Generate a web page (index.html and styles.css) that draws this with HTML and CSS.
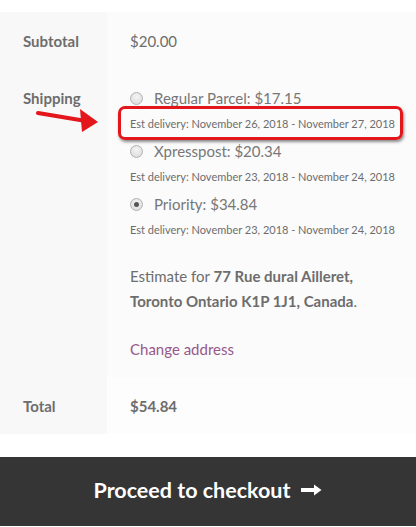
FILE: index.html
```html
<!DOCTYPE html>
<html>
<head>
<meta charset="utf-8">
<link rel="stylesheet" href="styles.css">
</head>
<body>
<table class="totals">
  <tr class="row row-subtotal">
    <th class="label">Subtotal</th>
    <td class="value">$20.00</td>
  </tr>
  <tr class="row row-shipping">
    <th class="label label-shipping">Shipping
      <svg class="arrow" width="70" height="30" viewBox="0 0 70 30">
        <line x1="2" y1="6" x2="50" y2="14" stroke="#e3161b" stroke-width="4" stroke-linecap="round"/>
        <polygon points="44,2 62,15 46,25" fill="#e3161b"/>
      </svg>
    </th>
    <td class="value value-shipping">
      <ul class="methods">
        <li class="method">
          <div class="option"><span class="radio"></span><span class="method-name">Regular Parcel: $17.15</span></div>
          <p class="est"><span class="est-text highlight">Est delivery: November 26, 2018 - November 27, 2018</span></p>
        </li>
        <li class="method">
          <div class="option"><span class="radio"></span><span class="method-name">Xpresspost: $20.34</span></div>
          <p class="est"><span class="est-text">Est delivery: November 23, 2018 - November 24, 2018</span></p>
        </li>
        <li class="method">
          <div class="option"><span class="radio checked"></span><span class="method-name">Priority: $34.84</span></div>
          <p class="est"><span class="est-text">Est delivery: November 23, 2018 - November 24, 2018</span></p>
        </li>
      </ul>
      <p class="destination">Estimate for <strong>77 Rue dural Ailleret, Toronto Ontario K1P 1J1, Canada</strong>.</p>
      <a class="change" href="#">Change address</a>
    </td>
  </tr>
  <tr class="row row-total">
    <th class="label">Total</th>
    <td class="value"><strong>$54.84</strong></td>
  </tr>
</table>
<div class="checkout-wrap">
  <a class="checkout" href="#">Proceed to checkout<svg class="checkout-arrow" width="21" height="12" viewBox="0 0 21 12"><rect x="0" y="4" width="14" height="4" fill="#ffffff"/><polygon points="13,0.5 20.5,6 13,11.5" fill="#ffffff"/></svg></a>
</div>
</body>
</html>
```

FILE: styles.css
```css
html, body {
  margin: 0;
  padding: 0;
  background: #ffffff;
}
body {
  font-family: "Lato", "Open Sans", sans-serif;
  color: #6d6d6d;
  width: 416px;
}
.totals {
  margin-top: 12px;
  width: 416px;
  border-collapse: collapse;
  border-spacing: 0;
}
.label {
  width: 107px;
  box-sizing: border-box;
  background: #f8f8f8;
  text-align: left;
  vertical-align: top;
  font-weight: 700;
  font-size: 15px;
  line-height: 24px;
  padding: 17px 0 17px 23px;
}
.value {
  background: #fbfbfb;
  vertical-align: top;
  font-size: 15px;
  line-height: 24px;
  padding: 17px 10px 17px 23px;
}
.row-shipping .label {
  padding-top: 16px;
}
.value-shipping {
  padding-top: 15px;
  padding-bottom: 16px;
}
.row-total .value {
  background: #fdfdfd;
}
.row-total .label, .row-total .value {
  padding-top: 17px;
  padding-bottom: 16px;
}
.label-shipping {
  position: relative;
}
.arrow {
  position: absolute;
  left: 36px;
  top: 37px;
}
.methods {
  list-style: none;
  margin: 0;
  padding: 0;
}
.method {
  margin: 0 0 1px 0;
}
.option {
  display: flex;
  align-items: center;
  height: 26px;
}
.radio {
  width: 13px;
  height: 13px;
  box-sizing: border-box;
  border-radius: 50%;
  border: 1px solid #b3b3b3;
  background: radial-gradient(circle at 50% 35%, #f4f4f4 0%, #d8d8d8 100%);
  margin-right: 11px;
  display: flex;
  align-items: center;
  justify-content: center;
  flex: none;
}
.radio.checked::after {
  content: "";
  width: 5px;
  height: 5px;
  border-radius: 50%;
  background: #555555;
}
.method-name {
  font-size: 15px;
  color: #777777;
}
.est {
  margin: 0;
  height: 26px;
  display: flex;
  align-items: center;
}
.est-text {
  font-size: 11px;
  color: #6d6d6d;
  position: relative;
  white-space: nowrap;
}
.highlight::after {
  content: "";
  position: absolute;
  left: -12px;
  right: -8px;
  top: -6px;
  bottom: -4px;
  border: 3px solid #e3161b;
  border-radius: 7px;
  box-shadow: 1px 2px 3px rgba(0,0,0,0.45);
}
.destination {
  margin: 21px 0 23px 0;
  font-size: 15px;
  line-height: 25px;
  width: 270px;
}
.destination strong {
  font-weight: 700;
}
.change {
  color: #96588a;
  text-decoration: none;
  font-size: 15px;
  line-height: 24px;
}
.checkout-wrap {
  margin-top: 23px;
}
.checkout {
  display: flex;
  justify-content: center;
  align-items: center;
  background: #353535;
  color: #ffffff;
  text-decoration: none;
  font-weight: 700;
  font-size: 21.5px;
  line-height: 28px;
  padding: 19px 0 22px 0;
}
.checkout-arrow {
  margin-left: 11px;
}
```
